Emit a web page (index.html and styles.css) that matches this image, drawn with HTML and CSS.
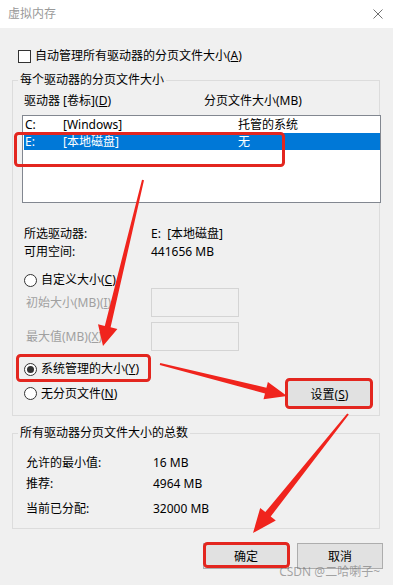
FILE: index.html
```html
<!DOCTYPE html>
<html lang="zh-CN">
<head>
    <meta charset="UTF-8">
    <meta name="viewport" content="width=device-width, initial-scale=1.0">
    <title>虚拟内存</title>
    <link rel="stylesheet" href="styles.css">
</head>
<body>
    <div class="window">
        <div class="titlebar">
            <span class="title">虚拟内存</span>
            <svg class="close" width="10" height="10" viewBox="0 0 10 10">
                <path d="M0.5 0.5 L9.5 9.5 M9.5 0.5 L0.5 9.5" stroke="#707070" stroke-width="1" fill="none"/>
            </svg>
        </div>
        <div class="dialog">
            <div class="check-row">
                <span class="checkbox"></span>
                <span>自动管理所有驱动器的分页文件大小(<u>A</u>)</span>
            </div>

            <fieldset class="group">
                <legend>每个驱动器的分页文件大小</legend>
                <div class="group-body">
                    <div class="list-head">
                        <span class="col-drive">驱动器 [卷标](<u>D</u>)</span>
                        <span>分页文件大小(MB)</span>
                    </div>
                    <div class="listbox">
                        <div class="list-row">
                            <span class="c-letter">C:</span>
                            <span class="c-label">[Windows]</span>
                            <span>托管的系统</span>
                        </div>
                        <div class="list-row selected">
                            <span class="c-letter">E:</span>
                            <span class="c-label">[本地磁盘]</span>
                            <span>无</span>
                        </div>
                    </div>

                    <div class="info-row first">
                        <span class="info-label">所选驱动器:</span>
                        <span>E:&nbsp;&nbsp;[本地磁盘]</span>
                    </div>
                    <div class="info-row">
                        <span class="info-label">可用空间:</span>
                        <span>441656 MB</span>
                    </div>

                    <div class="radio-row custom">
                        <span class="radio"></span>
                        <span>自定义大小(<u>C</u>)</span>
                    </div>
                    <div class="size-row">
                        <span class="size-label">初始大小(MB)(<u>I</u>):</span>
                        <span class="size-box"></span>
                    </div>
                    <div class="size-row second">
                        <span class="size-label">最大值(MB)(<u>X</u>):</span>
                        <span class="size-box"></span>
                    </div>
                    <div class="radio-row managed">
                        <span class="radio checked"></span>
                        <span>系统管理的大小(<u>Y</u>)</span>
                    </div>
                    <div class="last-row">
                        <div class="radio-row">
                            <span class="radio"></span>
                            <span>无分页文件(<u>N</u>)</span>
                        </div>
                        <button class="btn btn-set">设置(<u>S</u>)</button>
                    </div>
                </div>
            </fieldset>

            <fieldset class="group totals">
                <legend>所有驱动器分页文件大小的总数</legend>
                <div class="totals-body">
                    <div class="info-row">
                        <span class="info-label">允许的最小值:</span>
                        <span>16 MB</span>
                    </div>
                    <div class="info-row r2">
                        <span class="info-label">推荐:</span>
                        <span>4964 MB</span>
                    </div>
                    <div class="info-row r3">
                        <span class="info-label">当前已分配:</span>
                        <span>32000 MB</span>
                    </div>
                </div>
            </fieldset>

            <div class="buttons">
                <button class="btn btn-ok">确定</button>
                <button class="btn">取消</button>
            </div>
        </div>

        <div class="watermark">CSDN @二哈喇子~</div>

        <!-- red annotations drawn on top of the dialog -->
        <svg class="marks" width="393" height="585" viewBox="0 0 393 585">
            <g fill="none" stroke="#e3261f" stroke-width="3">
                <rect x="15.5" y="133.5" width="268" height="32" rx="3"/>
                <rect x="17.5" y="355.5" width="132" height="25" rx="3"/>
                <rect x="286.5" y="379.5" width="85" height="28" rx="3"/>
                <rect x="204.5" y="543.5" width="84" height="23" rx="3"/>
            </g>
            <g fill="#f0241d">
                <polygon points="144,180.2 110.6,327.3 117.4,328.9 103,346 98,324.2 104.8,325.9 142,179.8"/>
                <polygon points="160.2,363 266.4,387.7 267.9,381.9 287,396 263.5,399.3 265,393.5 159.8,365"/>
                <polygon points="348.8,414.6 270.7,516.5 275.8,520.5 253,533 260.2,508.1 265.3,512.1 347.2,413.4"/>
            </g>
        </svg>
    </div>
</body>
</html>
```

FILE: styles.css
```css
body {
    margin: 0;
    font-family: "Noto Sans", "Noto Sans CJK SC", sans-serif;
    font-size: 12px;
    line-height: 16px;
    color: #000;
    background: #f0f0f0;
}
u {
    text-underline-offset: 1px;
}
.window {
    position: relative;
    width: 393px;
    height: 585px;
    overflow: hidden;
    background: #f0f0f0;
}
.titlebar {
    height: 28px;
    background: #fff;
    display: flex;
    align-items: center;
    justify-content: space-between;
    padding: 0 10px 0 8px;
}
.title {
    color: #999;
}
.dialog {
    padding: 20px 0 0 12px;
}
.check-row {
    display: flex;
    align-items: center;
    gap: 4px;
    height: 16px;
    margin-left: 6px;
}
.checkbox {
    width: 13px;
    height: 13px;
    box-sizing: border-box;
    border: 1px solid #333;
    background: #fff;
}

/* group boxes */
.group {
    width: 368px;
    min-width: 0;
    box-sizing: border-box;
    margin: 8px 0 0 0;
    padding: 0;
    border: 1px solid #dcdcdc;
}
.group legend {
    margin-left: 5px;
    padding: 0 2px;
    line-height: 16px;
}
.group-body {
    padding: 5px 0 8px 10px;
}
.list-head {
    display: flex;
    margin-left: 1px;
}
.col-drive {
    width: 180px;
}
.listbox {
    width: 359px;
    height: 88px;
    box-sizing: border-box;
    margin: 6px 0 0 -1px;
    border: 1px solid #828790;
    background: #fff;
}
.list-row {
    display: flex;
    height: 17px;
    line-height: 17px;
    padding-left: 2px;
}
.list-row.selected {
    background: #0078d7;
    color: #fff;
    margin-left: 1px;
    padding-left: 1px;
}
.c-letter {
    width: 38px;
}
.c-label {
    width: 175px;
}
.info-row {
    display: flex;
    line-height: 18px;
}
.info-row.first {
    margin-top: 22px;
}
.info-label {
    width: 128px;
    box-sizing: border-box;
    padding-left: 1px;
}
.radio-row {
    display: flex;
    align-items: center;
    gap: 4px;
    height: 16px;
    margin-left: 1px;
}
.radio-row.custom {
    margin-top: 11px;
}
.radio-row.managed {
    margin-top: 10px;
}
.radio {
    width: 13px;
    height: 13px;
    box-sizing: border-box;
    border: 1px solid #333;
    border-radius: 50%;
    background: #fff;
    display: flex;
    align-items: center;
    justify-content: center;
}
.radio.checked::after {
    content: "";
    width: 7px;
    height: 7px;
    border-radius: 50%;
    background: #333;
}
.size-row {
    display: flex;
    align-items: center;
    height: 29px;
}
.size-row.second {
    margin-top: 5px;
}
.size-label {
    width: 128px;
    box-sizing: border-box;
    padding-left: 3px;
    color: #a0a0a0;
    white-space: nowrap;
    overflow: hidden;
}
.size-box {
    width: 88px;
    height: 29px;
    box-sizing: border-box;
    border: 1px solid #d4d4d4;
    background: #f0f0f0;
}
.last-row {
    display: flex;
    align-items: center;
    justify-content: space-between;
    height: 27px;
    margin-top: 3px;
}
.btn {
    font-family: inherit;
    font-size: 12px;
    color: #000;
    background: #e1e1e1;
    border: 1px solid #adadad;
    padding: 0;
    height: 26px;
    width: 86px;
}
.btn-set {
    width: 85px;
    height: 27px;
    margin-right: 7px;
}

.totals {
    margin-top: 9px;
}
.totals-body {
    padding: 13px 0 10px 12px;
}
.info-row.r2 {
    margin-top: 3px;
}
.info-row.r3 {
    margin-top: 7px;
}
.buttons {
    display: flex;
    justify-content: flex-end;
    gap: 8px;
    margin-top: 14px;
    padding-right: 10px;
}
.watermark {
    position: absolute;
    right: 13px;
    bottom: 5px;
    color: rgba(110, 110, 110, 0.6);
    white-space: nowrap;
}
.marks {
    position: absolute;
    top: 0;
    left: 0;
    pointer-events: none;
}
```
